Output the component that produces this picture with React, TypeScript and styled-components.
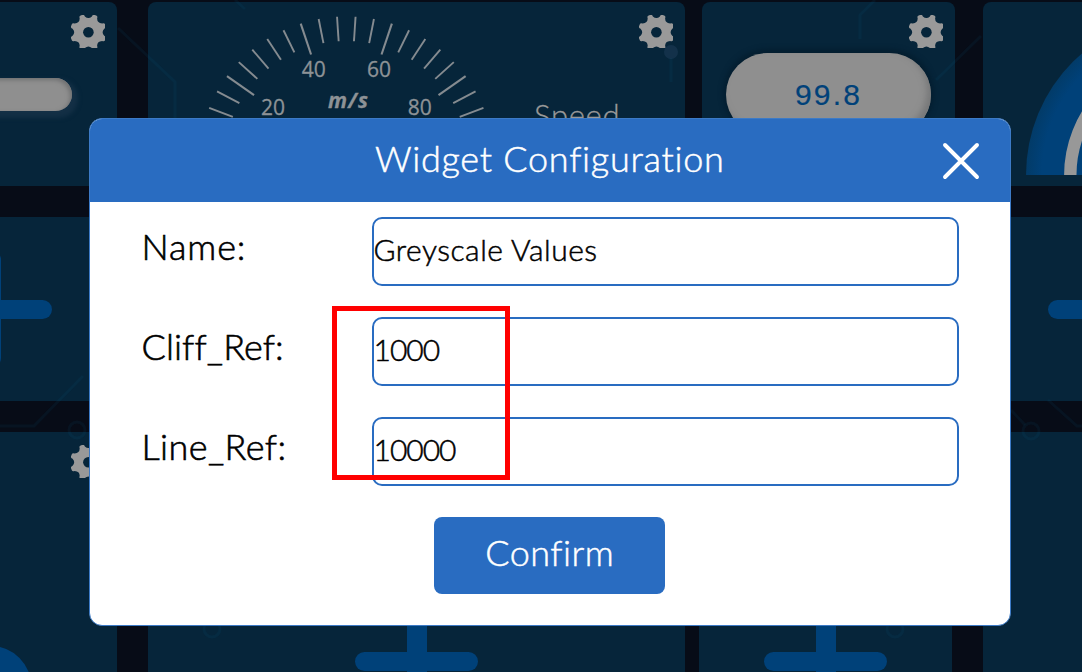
import React from "react";
import styled, { createGlobalStyle } from "styled-components";

const blue = "#296cc1";
const accent = "#004179";

const GlobalStyle = createGlobalStyle`
  * { box-sizing: border-box; }
  body { margin: 0; background: #070c17; }
`;

const Screen = styled.div`
  position: relative;
  width: 1082px;
  height: 672px;
  overflow: hidden;
  background: #070c17;
  font-family: Lato, "Liberation Sans", sans-serif;
`;

const Board = styled.div`
  display: flex;
  flex-direction: column;
  gap: 31px;
  width: 1520px;
  padding-top: 2px;
  margin-left: -136px;
`;

const BoardRow = styled.div<{ $height: number }>`
  display: flex;
  height: ${(p) => p.$height}px;
`;

const Tile = styled.section<{ $width: number; $gap?: number; $top?: boolean }>`
  position: relative;
  flex: none;
  display: flex;
  align-items: center;
  justify-content: center;
  width: ${(p) => p.$width}px;
  margin-left: ${(p) => p.$gap ?? 0}px;
  border-radius: ${(p) => (p.$top ? "8px 8px 0 0" : "0")};
  background: #06253a;
  overflow: hidden;
`;

const GearSlot = styled.span`
  position: absolute;
  top: 13px;
  right: 12px;
  display: flex;
`;

const Plus = styled.div`
  display: grid;
  width: 123px;
  height: 118px;
  &::before,
  &::after {
    content: "";
    grid-area: 1 / 1;
    place-self: center;
    border-radius: 10px;
    background: ${accent};
  }
  &::before { width: 100%; height: 19px; }
  &::after { width: 20px; height: 100%; }
`;

const SliderTrack = styled.div`
  width: 162px;
  height: 33px;
  margin-top: 1px;
  border-radius: 17px;
  background: #8f8f8f;
  box-shadow: inset -2px 2px 4px #6f7071, 3px 4px 4px 3px #132f45;
`;

const Readout = styled.div`
  display: flex;
  align-items: center;
  justify-content: center;
  width: 205px;
  height: 83px;
  padding-top: 2px;
  border-radius: 42px;
  background: #8f8f8f;
  box-shadow: inset -4px -4px 6px #777879, 0 -1px 5px 3px #041e30;
  color: ${accent};
  font: 30px "Liberation Sans", sans-serif;
  letter-spacing: 2.2px;
  -webkit-text-stroke: 0.2px ${accent};
`;

const SpeedWidget = styled.div`
  display: grid;
  grid-template-columns: 386px 1fr;
  width: 100%;
  height: 100%;
`;

const SpeedLabel = styled.span`
  padding-top: 93px;
  font-size: 31px;
  font-weight: 300;
  line-height: 40px;
  letter-spacing: 0.7px;
  color: #999;
  -webkit-text-stroke: 0.3px #999;
`;

const Backdrop = styled.svg`
  position: absolute;
  inset: 0;
`;

const Dialog = styled.div`
  position: absolute;
  top: 118px;
  left: 88.5px;
  display: flex;
  flex-direction: column;
  align-items: center;
  width: 922.5px;
  height: 508px;
  border: 1px solid #3c7ac6;
  border-radius: 13px;
  background: #fff;
  overflow: hidden;
`;

const DialogHeader = styled.header`
  display: grid;
  grid-template-columns: 1fr auto 1fr;
  align-items: center;
  width: 100%;
  height: 83px;
  flex: none;
  background: ${blue};
`;

const Title = styled.h1`
  grid-column: 2;
  margin: 0;
  padding-bottom: 6px;
  font-size: 36px;
  font-weight: 300;
  line-height: 44px;
  letter-spacing: 0.72px;
  color: #fff;
  -webkit-text-stroke: 0.5px #fff;
`;

const CloseButton = styled.button`
  justify-self: end;
  display: flex;
  margin-right: 29px;
  padding: 0;
  border: 0;
  background: none;
`;

const Fields = styled.div`
  display: flex;
  flex-direction: column;
  gap: 31px;
  width: 100%;
  padding: 15px 52px 0 52px;
`;

const Field = styled.label`
  display: grid;
  grid-template-columns: 230px 587px;
  height: 69px;
`;

const FieldName = styled.span<{ $spacing: number }>`
  padding-top: 7px;
  font-size: 36px;
  font-weight: 300;
  line-height: 44px;
  letter-spacing: ${(p) => p.$spacing}px;
  color: #000;
  -webkit-text-stroke: 0.6px #000;
`;

const FieldInput = styled.input<{ $spacing: number }>`
  width: 100%;
  height: 69px;
  padding: 0 0 6px;
  border: 2px solid ${blue};
  border-radius: 10px;
  outline: 0;
  background: transparent;
  color: #000;
  font: 300 30px Lato, "Liberation Sans", sans-serif;
  letter-spacing: ${(p) => p.$spacing}px;
  -webkit-text-stroke: 0.5px #000;
`;

const ConfirmButton = styled.button`
  width: 231px;
  height: 77px;
  margin-top: 31px;
  padding: 0 0 8px;
  border: 0;
  border-radius: 8px;
  background: ${blue};
  color: #fff;
  font: 300 36px Lato, "Liberation Sans", sans-serif;
  letter-spacing: 0.5px;
  -webkit-text-stroke: 0.5px #fff;
`;

const Highlight = styled.div`
  position: absolute;
  top: 306px;
  left: 332px;
  width: 178px;
  height: 174px;
  border: 5px solid #f00;
`;

const polar = (r: number, deg: number) => {
  const a = (deg * Math.PI) / 180;
  return `${(17.4 + r * Math.sin(a)).toFixed(2)} ${(17.2 - r * Math.cos(a)).toFixed(2)}`;
};

const gearPath =
  Array.from({ length: 8 }, (_, i) => {
    const t = 22.5 + i * 45;
    return `${i ? "L" : "M"}${polar(16.2, t - 10)} Q${polar(18.6, t - 8)} ${polar(18.4, t - 4)} L${polar(18.4, t + 4)} Q${polar(18.6, t + 8)} ${polar(16.2, t + 10)} Q${polar(12.6, t + 22.5)} ${polar(16.2, t + 35)}`;
  }).join(" ") + "Z";

function Gear() {
  return (
    <GearSlot>
      <svg width="34" height="33" viewBox="0 0 34 33">
        <path d={gearPath} fill="#999" />
        <circle cx="17.4" cy="17.2" r="5.3" fill="#06253a" />
      </svg>
    </GearSlot>
  );
}

const ticks = Array.from({ length: 20 }, (_, i) => {
  const deg = -68.4 + i * 7.2;
  const a = (deg * Math.PI) / 180;
  const major = i === 2 || i === 7 || i === 12 || i === 17;
  const s = Math.sin(a);
  const c = Math.cos(a);
  return {
    major,
    x1: 198.3 + 147.5 * s,
    y1: 159 - 144.5 * c,
    x2: 198.3 + (major ? 114 : 122) * s,
    y2: 159 - (major ? 112 : 120) * c,
  };
});

function SpeedGauge() {
  return (
    <svg width="386" height="184" viewBox="0 0 386 184">
      <g stroke="#858b90">
        {ticks.map((t, i) => (
          <line key={i} x1={t.x1} y1={t.y1} x2={t.x2} y2={t.y2} strokeWidth={t.major ? 2.1 : 1.9} />
        ))}
      </g>
      <g fill="#8d9296" stroke="#8d9296" strokeWidth="0.3" fontFamily="'Open Sans', sans-serif" fontSize="21" textAnchor="middle">
        <text x="125" y="112.8">20</text>
        <text x="165.7" y="75.4">40</text>
        <text x="231" y="75.4">60</text>
        <text x="271.7" y="112.8">80</text>
        <text x="200" y="105.5" fontWeight="700" fontStyle="italic" textLength="40">m/s</text>
      </g>
    </svg>
  );
}

function ArcGauge() {
  return (
    <svg width="406" height="184" viewBox="0 0 406 184">
      <defs>
        <radialGradient id="dial" gradientUnits="userSpaceOnUse" cx="203" cy="173" r="160">
          <stop offset="0.9" stopColor={accent} />
          <stop offset="1" stopColor="#023b68" />
        </radialGradient>
      </defs>
      <path d="M43 173a160 160 0 0 1 320 0z" fill="url(#dial)" />
      <path d="M87.3 173a115.7 115.7 0 0 1 231.4 0" fill="none" stroke="#989898" strokeWidth="12.4" />
    </svg>
  );
}

const fields = [
  { name: "Name:", value: "Greyscale Values", nameSpacing: 0.9, spacing: 0.5 },
  { name: "Cliff_Ref:", value: "1000", nameSpacing: 0.1, spacing: -1 },
  { name: "Line_Ref:", value: "10000", nameSpacing: 0.4, spacing: -1 },
];

export default function App() {
  return (
    <Screen>
      <GlobalStyle />
      <Board>
        <BoardRow $height={184}>
          <Tile $width={253} $top>
            <SliderTrack />
            <Gear />
          </Tile>
          <Tile $width={537} $gap={31} $top>
            <SpeedWidget>
              <SpeedGauge />
              <SpeedLabel>Speed</SpeedLabel>
            </SpeedWidget>
            <Gear />
          </Tile>
          <Tile $width={253} $gap={17} $top>
            <Readout>99.8</Readout>
            <Gear />
          </Tile>
          <Tile $width={406} $gap={28} $top>
            <ArcGauge />
          </Tile>
        </BoardRow>
        <BoardRow $height={184}>
          <Tile $width={253}><Plus /></Tile>
          <Tile $width={537} $gap={31} />
          <Tile $width={253} $gap={14} />
          <Tile $width={253} $gap={31}><Plus /></Tile>
        </BoardRow>
        <BoardRow $height={458}>
          <Tile $width={253}>
            <svg width="253" height="458" viewBox="0 0 253 458">
              <circle cx="126.5" cy="255" r="41" fill={accent} />
            </svg>
            <Gear />
          </Tile>
          <Tile $width={537} $gap={31}><Plus /></Tile>
          <Tile $width={253} $gap={14}><Plus /></Tile>
          <Tile $width={253} $gap={31} />
        </BoardRow>
      </Board>

      <Backdrop width="1082" height="672" fill="none" stroke="#0e6085" strokeOpacity="0.1" strokeWidth="3">
        <path d="M118 28L175 82V118M235 0l10 9M875 0l-15 15v24M936 80l45-44M0 426H34L83 376" />
        <path d="M1011 410l14 15M1048 400l29 26h5M671 58v24" />
        <circle cx="77" cy="430" r="8" />
        <circle cx="1031" cy="431" r="8" />
        <circle cx="212" cy="629" r="8" />
        <circle cx="895" cy="629" r="8" />
        <circle cx="671" cy="52" r="7" fill="#335070" fillOpacity="0.3" stroke="none" />
      </Backdrop>

      <Dialog role="dialog">
        <DialogHeader>
          <Title>Widget Configuration</Title>
          <CloseButton aria-label="Close">
            <svg width="40" height="40" viewBox="0 0 40 40" stroke="#fff" strokeWidth="3.9" strokeLinecap="round">
              <path d="M4 4L36 36M36 4L4 36" />
            </svg>
          </CloseButton>
        </DialogHeader>
        <Fields>
          {fields.map((f) => (
            <Field key={f.name}>
              <FieldName $spacing={f.nameSpacing}>{f.name}</FieldName>
              <FieldInput $spacing={f.spacing} defaultValue={f.value} />
            </Field>
          ))}
        </Fields>
        <ConfirmButton>Confirm</ConfirmButton>
      </Dialog>
      <Highlight />
    </Screen>
  );
}
